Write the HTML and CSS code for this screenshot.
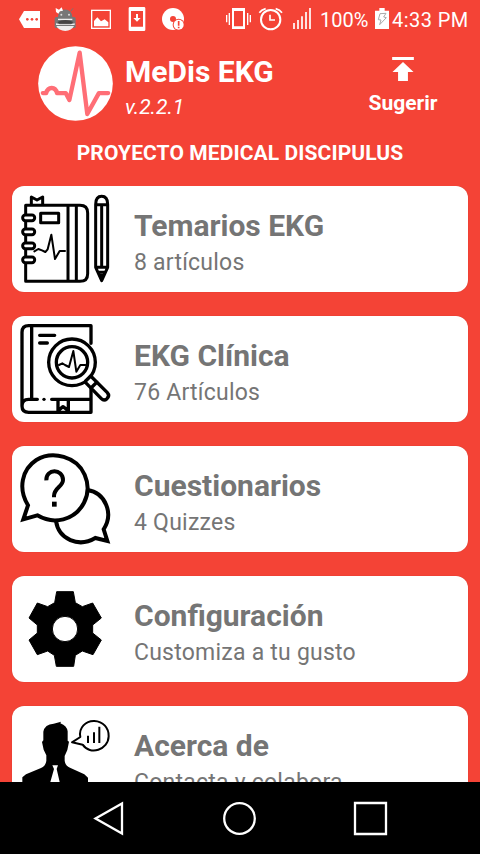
FILE: index.html
```
<!DOCTYPE html>
<html lang="es">
<head>
<meta charset="utf-8">
<title>MeDis EKG</title>
<link rel="stylesheet" href="styles.css">
</head>
<body>
<div class="screen">
  <div class="status">
    <svg class="status-left" viewBox="0 0 660 120">
      <path fill="#fff" d="M72 33H120V84H72L57 58Z"/>
      <g fill="#f44336"><circle cx="82" cy="58" r="4"/><circle cx="96" cy="58" r="4"/><circle cx="110" cy="58" r="4"/></g>
      <path fill="#777" d="M174 54C172 20 218 20 217 54Z"/>
      <path stroke="#777" stroke-width="3" d="M212 34L219 25"/>
      <path fill="#fff" d="M167 24L177 29L185 22L189 32L180 34L175 41L168 36Z"/>
      <circle cx="184" cy="44" r="3" fill="#ddd"/><circle cx="207" cy="44" r="3" fill="#ddd"/>
      <path fill="#777" d="M164 56Q164 51 169 51H222Q227 51 227 56V80Q227 84 222 84H169Q164 84 164 80Z"/>
      <path fill="#eee" d="M174 56H217V60H174ZM168 70L180 73H212L224 70V75H168ZM169 78H222Q215 92 196 93Q176 92 169 78Z"/>
      <path fill="#444" d="M172 66Q196 54 220 66L214 71H178Z"/>
      <rect x="275" y="31" width="56" height="54" fill="none" stroke="#fff" stroke-width="4"/>
      <path fill="#fff" d="M282 79V63L292 52L303 64L314 58L325 67V79Z"/>
      <path fill="#fff" fill-rule="evenodd" d="M390 21H432Q436 21 436 25V89Q436 93 432 93H390Q386 93 386 89V25Q386 21 390 21ZM393 33V80H429V33Z"/>
      <path fill="#fff" d="M408 42H414V54H422L411 65L400 54H408Z"/>
      <circle cx="519" cy="57" r="33" fill="#fff"/><circle cx="519" cy="57" r="9" fill="#f44336"/>
      <circle cx="536" cy="74" r="18" fill="#f44336"/><circle cx="536" cy="74" r="15" fill="#fff"/>
      <path stroke="#f44336" stroke-width="5" d="M536 63V77M536 80V85"/>
    </svg>
    <svg class="status-right" viewBox="0 0 294 120">
      <path fill="none" stroke="#fff" stroke-width="4" d="M20 45V67M28 39V75M83 39V75M91 45V67"/>
      <path fill="#fff" fill-rule="evenodd" d="M36 24H75V87H36ZM42 33V79H69V33Z"/>
      <circle cx="152" cy="59" r="29" fill="none" stroke="#fff" stroke-width="6"/>
      <path fill="none" stroke="#fff" stroke-width="5" d="M150 44V60H165"/>
      <path fill="none" stroke="#fff" stroke-width="5" d="M118 38Q124 30 137 26M167 26Q180 30 186 38"/>
      <path fill="none" stroke="#fff" stroke-width="5" d="M222 69V87M234 60V87M246 49V87M258 36V87M270 24V87"/>
    </svg>
    <span class="percent">100%</span>
    <svg class="battery" viewBox="465 21 45 69">
      <path fill="#fff" d="M478 24H494V32H507V87H465V32H478Z"/>
      <path fill="none" stroke="#aaa" stroke-width="3" d="M480 41L498 40L491 51L499 53L479 74L483 60L475 59Z"/>
    </svg>
    <span class="clock">4:33 PM</span>
  </div>

  <header class="header">
    <svg class="logo" viewBox="114 17 225 226">
      <circle cx="226.500" cy="130" r="112.500" fill="#fff"/>
      <path fill="none" stroke="#ff6e76" stroke-width="13" stroke-linecap="round" stroke-linejoin="round" d="M128 159H138C144 138 166 139 171 159H197L208 180L239 37L262 222L297 159H325"/>
    </svg>
    <div class="brand">
      <h1>MeDis EKG</h1>
      <p>v.2.2.1</p>
    </div>
    <div class="suggest">
      <svg viewBox="276 51 66 73"><path fill="#fff" d="M276 51H342V60H276ZM309 66L341 97H324V124H294V97H277Z"/></svg>
      <span>Sugerir</span>
    </div>
  </header>
  <h2 class="project">PROYECTO MEDICAL DISCIPULUS</h2>

  <main class="list">
    <section class="card">
      <svg class="icon" viewBox="36 18 366 318">
        <g class="line">
          <path d="M77 304V76H240Q263 76 263 99V281Q263 304 240 304ZM204 76V304M229 76V304M94 76V51L111 60L128 51V76"/>
          <rect x="122" y="100" width="54" height="28"/>
          <g fill="#fff"><rect x="68" y="105" width="36" height="17" rx="8"/><rect x="68" y="147" width="36" height="17" rx="8"/><rect x="68" y="189" width="36" height="17" rx="8"/><rect x="68" y="231" width="36" height="17" rx="8"/></g>
          <path stroke-width="6" d="M103 214L115 207L126 211L136 216L143 208L154 164L165 237L179 213H195"/>
          <path d="M287 73V262L305 302L323 262V73Q323 49 305 49Q287 49 287 73ZM287 74H323M287 262H323M294 277H316M305 74V262"/>
        </g>
        <path d="M297 281H313L305 302Z"/>
      </svg>
      <div class="text"><h3>Temarios EKG</h3><p>8 artículos</p></div>
    </section>
    <section class="card">
      <svg class="icon" viewBox="36 18 366 318">
        <g class="line thick">
          <path d="M273 100V47H86Q66 47 66 67V288Q66 307 86 307H273V225M95 47V268M66 288Q66 268 86 268H112M155 268H273M119 76H164M119 99H142M174 270V302L189 290L205 302V270"/>
          <circle cx="216" cy="157" r="70" fill="#fff"/><circle cx="216" cy="157" r="47"/>
          <path stroke-width="6" d="M177 165L187 160L195 165L207 171L220 123L229 185L241 165H256"/>
          <path fill="#fff" d="M257 213L272 198L322 248Q330 257 321 266Q312 274 304 266L257 218ZM276 231L291 216"/>
        </g>
        <circle cx="132" cy="268" r="5"/>
      </svg>
      <div class="text"><h3>EKG Clínica</h3><p>76 Artículos</p></div>
    </section>
    <section class="card">
      <svg class="icon" viewBox="36 18 366 318">
        <g class="line bubble">
          <path d="M262 150C316 158 342 220 311 268L322 303L286 294C236 324 176 298 168 243"/>
          <path fill="#fff" d="M84 196C53 145 66 88 109 60C158 30 231 50 254 104C280 164 244 224 190 238C162 245 134 239 112 226L70 238L84 196Z"/>
          <path d="M139 121C137 85 189 85 189 120C189 140 162 143 162 168V172"/>
        </g>
        <rect x="156" y="185" width="14" height="15"/>
      </svg>
      <div class="text"><h3>Cuestionarios</h3><p>4 Quizzes</p></div>
    </section>
    <section class="card">
      <svg class="icon" viewBox="36 18 366 318">
        <path fill-rule="evenodd" stroke="#000" stroke-width="3" stroke-linejoin="round" d="M170 65H220L226 98L247 110L278 99L304 144L278 165V189L304 210L279 254L247 243L226 256L221 289H169L163 256L143 243L112 254L87 210L112 189V165L87 144L112 99L143 110L164 98ZM195 139A38 38 0 1 0 195 215A38 38 0 1 0 195 139Z"/>
      </svg>
      <div class="text"><h3>Configuración</h3><p>Customiza a tu gusto</p></div>
    </section>
    <section class="card">
      <svg class="icon" viewBox="36 18 366 318">
        <path d="M67 256V232L78 223L123 204Q137 198 139 182V166L131 149L126 126L130 121V95Q134 73 161 71L183 65L181 70Q201 78 203 94V122L207 125L202 150L194 168V182Q196 198 210 203L253 223L264 233V256Z"/>
        <path fill="#fff" d="M157 196H174L170 207L179 246H151L162 207Z"/>
        <path fill="#fff" stroke="#000" stroke-width="6" stroke-linejoin="round" d="M241 111C235 83 258 62 283 63C309 64 327 84 326 109C325 150 270 167 248 134L216 127L241 111Z"/>
        <path stroke="#000" stroke-width="6" d="M264 107V129M282 97V129M298 80V129"/>
      </svg>
      <div class="text"><h3>Acerca de</h3><p>Contacta y colabora</p></div>
    </section>
  </main>

  <nav class="navbar">
    <svg viewBox="0 0 480 72" fill="none" stroke="#fff" stroke-width="2.300">
      <path d="M122 21.500V51.500L95.500 36.500Z"/><circle cx="239.500" cy="36.500" r="15.300"/><path d="M355 21H386V52H355Z"/>
    </svg>
  </nav>
</div>
</body>
</html>
```
FILE: styles.css
```
* { box-sizing: border-box; }
body { margin: 0; font-family: Roboto, sans-serif; }
h1, h2, h3, p { margin: 0; }
svg { display: block; flex: none; }
.screen {
  width: 480px;
  height: 854px;
  display: flex;
  flex-direction: column;
  overflow: hidden;
  background: #f44336;
  color: #fff;
}
.status { flex: none; height: 40px; display: flex; font-size: 20px; line-height: 40px; white-space: nowrap; }
.status-left { width: 220px; height: 40px; }
.status-right { width: 98px; height: 40px; }
.percent { width: 57px; padding-left: 2px; }
.battery { width: 15px; height: 23px; margin-top: 7px; }
.clock { padding-left: 2px; letter-spacing: .45px; }
.header { flex: none; height: 90px; display: flex; padding: 6px 30px 0 38px; }
.logo { width: 75px; height: 75px; }
.brand { margin-left: 12px; flex: 1; }
.brand h1 { margin-top: 8px; font-size: 30px; line-height: 36px; font-weight: 700; white-space: nowrap; }
.brand p { margin-top: 5px; font-size: 21px; line-height: 24px; font-style: italic; }
.suggest { width: 94px; padding-top: 11px; display: flex; flex-direction: column; align-items: center; }
.suggest svg { width: 22px; height: 24px; }
.suggest span { margin-top: 10px; font-size: 21px; line-height: 24px; font-weight: 700; }
.project { flex: none; height: 56px; padding-top: 11px; font-size: 21px; line-height: 24px; font-weight: 700; letter-spacing: .1px; text-align: center; white-space: nowrap; }
.list { flex: 1; min-height: 0; overflow: hidden; padding: 0 12px; display: flex; flex-direction: column; gap: 24px; }
.card {
  flex: none;
  height: 106px;
  display: flex;
  border-radius: 12px;
  background: #fff;
  color: #757575;
  box-shadow: 0 0 1px rgba(120, 20, 10, .35);
}
.icon { width: 122px; height: 106px; }
.line { fill: none; stroke: #000; stroke-width: 9px; stroke-linecap: round; stroke-linejoin: round; }
.thick { stroke-width: 10px; }
.bubble { stroke-width: 12px; stroke-linecap: butt; stroke-linejoin: miter; }
.text { padding-top: 22px; white-space: nowrap; }
.text h3 { font-size: 30px; line-height: 36px; font-weight: 700; }
.text p { margin-top: 5px; font-size: 23px; line-height: 28px; letter-spacing: .23px; }
.navbar { flex: none; height: 72px; background: #000; }
.navbar svg { width: 480px; height: 72px; }
```
